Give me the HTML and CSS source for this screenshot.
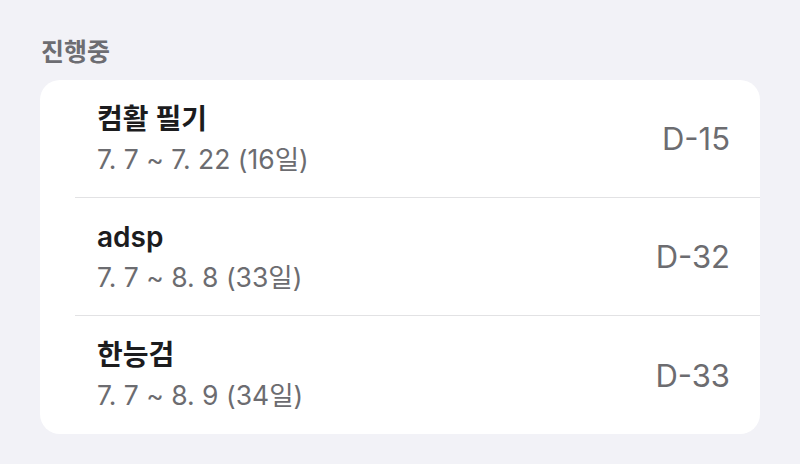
FILE: index.html
```html
<!DOCTYPE html>
<html lang="ko">
<head>
    <meta charset="UTF-8">
    <title>진행중</title>
    <link rel="stylesheet" href="styles.css">
</head>
<body>
    <div class="section">
        <h2 class="section-title">진행중</h2>
        <div class="list-card">
            <div class="list-row">
                <div class="row-text">
                    <div class="row-title">컴활 필기</div>
                    <div class="row-date">7. 7 ~ 7. 22 (16일)</div>
                </div>
                <div class="row-dday">D-15</div>
            </div>
            <div class="list-row">
                <div class="row-text">
                    <div class="row-title">adsp</div>
                    <div class="row-date">7. 7 ~ 8. 8 (33일)</div>
                </div>
                <div class="row-dday">D-32</div>
            </div>
            <div class="list-row">
                <div class="row-text">
                    <div class="row-title">한능검</div>
                    <div class="row-date">7. 7 ~ 8. 9 (34일)</div>
                </div>
                <div class="row-dday">D-33</div>
            </div>
        </div>
    </div>
</body>
</html>
```

FILE: styles.css
```css
body, html {
    margin: 0;
    padding: 0;
    width: 100%;
    height: 100%;
    overflow: hidden;
    background-color: #f2f2f7;
    font-family: Inter, "Noto Sans CJK KR", sans-serif;
}
.section {
    padding: 37px 40px 0 40px;
}
.section-title {
    margin: 0 0 13px 1px;
    font-size: 25px;
    line-height: 30px;
    font-weight: 600;
    color: #6d6d72;
}
.list-card {
    background-color: #fff;
    border-radius: 20px;
    overflow: hidden;
}
.list-row {
    display: flex;
    align-items: center;
    height: 118px;
    box-sizing: border-box;
    margin-left: 35px;
    padding: 0 30px 0 22px;
    border-bottom: 1px solid #e2e2e4;
}
.list-row:last-child {
    border-bottom: none;
}
.row-text {
    flex-grow: 1; /* push D-day to the right */
}
.row-title {
    font-size: 28px;
    line-height: 40px;
    font-weight: 600;
    color: #1c1c1e;
}
.row-date {
    font-size: 26.5px;
    line-height: 40px;
    color: #6c6c70;
}
.row-dday {
    font-size: 31px;
    color: #6c6c70;
}
```
